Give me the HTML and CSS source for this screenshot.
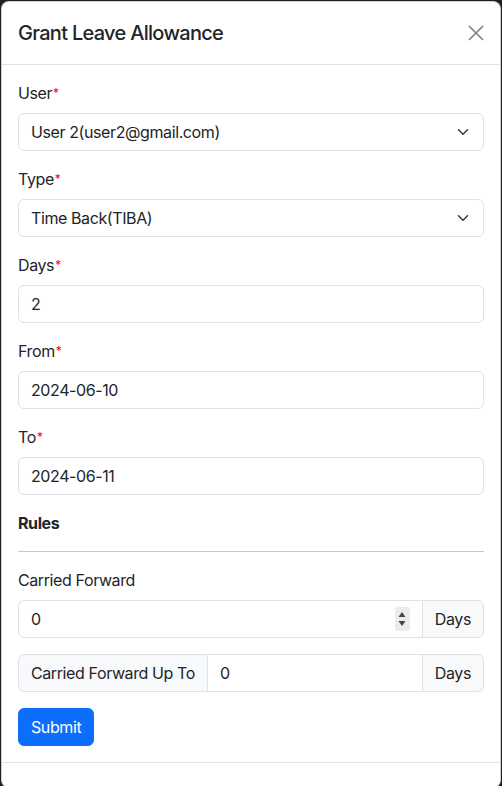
FILE: index.html
```html
<!DOCTYPE html>
<html lang="en">
<head>
<meta charset="utf-8">
<title>Grant Leave Allowance</title>
<link rel="stylesheet" href="styles.css">
</head>
<body>
<div class="modal">
  <div class="modal-header">
    <h5 class="modal-title">Grant Leave Allowance</h5>
    <button class="btn-close" type="button" aria-label="Close">
      <svg viewBox="0 0 16 16" width="16" height="16"><path d="M1 1L15 15M15 1L1 15" stroke="#000" stroke-width="1.6" fill="none"/></svg>
    </button>
  </div>
  <div class="modal-body">
    <div class="field">
      <label class="form-label">User<span class="req">*</span></label>
      <div class="form-select">User 2(user2@gmail.com)<svg class="chev" viewBox="0 0 16 16" width="16" height="12"><path d="m2 5 6 6 6-6" fill="none" stroke="#343a40" stroke-width="2" stroke-linecap="round" stroke-linejoin="round"/></svg></div>
    </div>
    <div class="field">
      <label class="form-label">Type<span class="req">*</span></label>
      <div class="form-select">Time Back(TIBA)<svg class="chev" viewBox="0 0 16 16" width="16" height="12"><path d="m2 5 6 6 6-6" fill="none" stroke="#343a40" stroke-width="2" stroke-linecap="round" stroke-linejoin="round"/></svg></div>
    </div>
    <div class="field">
      <label class="form-label">Days<span class="req">*</span></label>
      <div class="form-control">2</div>
    </div>
    <div class="field">
      <label class="form-label">From<span class="req">*</span></label>
      <div class="form-control">2024-06-10</div>
    </div>
    <div class="field">
      <label class="form-label">To<span class="req">*</span></label>
      <div class="form-control">2024-06-11</div>
    </div>
    <div class="rules">Rules</div>
    <hr class="divider">
    <label class="form-label">Carried Forward</label>
    <div class="input-group field">
      <div class="form-control grow spin-wrap">
        <span>0</span>
        <span class="spinner"><svg viewBox="0 0 10 22" width="10" height="22"><path d="M5 4L8.5 9H1.5Z M5 18L8.5 13H1.5Z" fill="#444"/></svg></span>
      </div>
      <span class="input-group-text">Days</span>
    </div>
    <div class="input-group field">
      <span class="input-group-text">Carried Forward Up To</span>
      <div class="form-control grow">0</div>
      <span class="input-group-text">Days</span>
    </div>
    <button class="btn-primary" type="button">Submit</button>
  </div>
  <div class="modal-footer"></div>
</div>
</body>
</html>
```
FILE: styles.css
```css
html, body {
  margin: 0;
  padding: 0;
  background: #1f1f1f;
}
body {
  padding: 1px;
  font-family: Inter, "Noto Sans", sans-serif;
  font-size: 16px;
  line-height: 24px;
  letter-spacing: -0.025em;
  color: #212529;
}
.modal {
  width: 498px;
  background: #fff;
  border: 1px solid rgba(0,0,0,0.175);
  border-radius: 8px;
  overflow: hidden;
}
.modal-header {
  display: flex;
  align-items: center;
  justify-content: space-between;
  padding: 16px;
  border-bottom: 1px solid #dee2e6;
}
.modal-title {
  margin: 0;
  font-size: 20px;
  line-height: 30px;
  font-weight: 500;
  letter-spacing: -0.035em;
}
.btn-close {
  border: 0;
  background: transparent;
  padding: 0;
  margin-right: 0;
  width: 16px;
  height: 16px;
  opacity: 0.5;
  display: flex;
}
.modal-body {
  padding: 16px;
}
.field {
  margin-bottom: 16px;
}
.form-label {
  display: block;
  margin-bottom: 8px;
}
.req {
  color: #ff0000;
  font-size: 12px;
  vertical-align: 2px;
  margin-left: 1px;
}
.form-select, .form-control {
  box-sizing: border-box;
  height: 38px;
  padding: 6px 12px;
  border: 1px solid #dee2e6;
  border-radius: 6px;
  background: #fff;
  display: flex;
  align-items: center;
}
.form-select {
  justify-content: space-between;
  padding-right: 12px;
}
.rules {
  font-weight: 700;
  margin-bottom: 0;
}
.divider {
  margin: 16px 0;
  border: 0;
  border-top: 1px solid rgba(33,37,41,0.25);
}
.input-group {
  display: flex;
  height: 38px;
}
.input-group > * {
  border-radius: 0;
}
.input-group > *:first-child {
  border-radius: 6px 0 0 6px;
}
.input-group > *:last-child {
  border-radius: 0 6px 6px 0;
}
.input-group > * + * {
  margin-left: -1px;
}
.grow {
  flex: 1;
  min-width: 0;
}
.input-group-text {
  box-sizing: border-box;
  display: flex;
  align-items: center;
  padding: 6px 12px;
  background: #f8f9fa;
  border: 1px solid #dee2e6;
  white-space: nowrap;
}
.spin-wrap {
  justify-content: space-between;
  padding-right: 12px;
}
.spinner {
  display: flex;
  align-items: center;
  justify-content: center;
  width: 15px;
  height: 24px;
  background: #ececec;
  border-radius: 2px;
}
.btn-primary {
  display: block;
  height: 38px;
  padding: 6px 12px;
  font-family: inherit;
  font-size: 16px;
  line-height: 24px;
  letter-spacing: inherit;
  color: #fff;
  background: #0d6efd;
  border: 1px solid #0d6efd;
  border-radius: 6px;
}
.modal-footer {
  height: 24px;
  border-top: 1px solid #dee2e6;
}
```
